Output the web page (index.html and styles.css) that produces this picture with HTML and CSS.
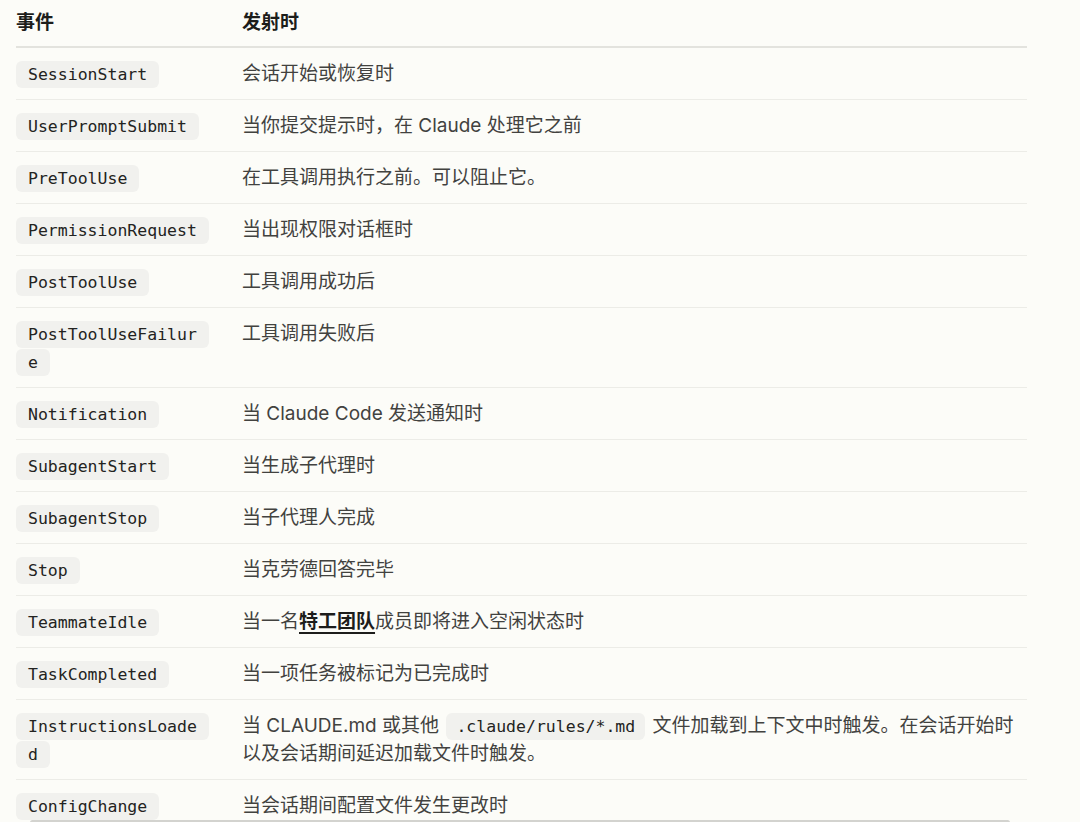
FILE: index.html
```html
<!DOCTYPE html>
<html lang="zh-CN">
<head>
<meta charset="utf-8">
<title>Hooks 事件</title>
<link rel="stylesheet" href="styles.css">
</head>
<body>
<div class="page">
  <table class="events">
    <colgroup>
      <col class="col-event">
      <col class="col-desc">
    </colgroup>
    <thead>
      <tr><th>事件</th><th>发射时</th></tr>
    </thead>
    <tbody>
      <tr><td><code class="tag">SessionStart</code></td><td>会话开始或恢复时</td></tr>
      <tr><td><code class="tag">UserPromptSubmit</code></td><td>当你提交提示时，在 Claude 处理它之前</td></tr>
      <tr><td><code class="tag">PreToolUse</code></td><td>在工具调用执行之前。可以阻止它。</td></tr>
      <tr><td><code class="tag">PermissionRequest</code></td><td>当出现权限对话框时</td></tr>
      <tr><td><code class="tag">PostToolUse</code></td><td>工具调用成功后</td></tr>
      <tr><td><code class="tag">PostToolUseFailure</code></td><td>工具调用失败后</td></tr>
      <tr><td><code class="tag">Notification</code></td><td>当 Claude Code 发送通知时</td></tr>
      <tr><td><code class="tag">SubagentStart</code></td><td>当生成子代理时</td></tr>
      <tr><td><code class="tag">SubagentStop</code></td><td>当子代理人完成</td></tr>
      <tr><td><code class="tag">Stop</code></td><td>当克劳德回答完毕</td></tr>
      <tr><td><code class="tag">TeammateIdle</code></td><td>当一名<a class="link" href="#">特工团队</a>成员即将进入空闲状态时</td></tr>
      <tr><td><code class="tag">TaskCompleted</code></td><td>当一项任务被标记为已完成时</td></tr>
      <tr><td><code class="tag">InstructionsLoaded</code></td><td>当 CLAUDE.md 或其他 <code class="tag inline">.claude/rules/*.md</code> 文件加载到上下文中时触发。在会话开始时以及会话期间延迟加载文件时触发。</td></tr>
      <tr><td><code class="tag">ConfigChange</code></td><td>当会话期间配置文件发生更改时</td></tr>
    </tbody>
  </table>
</div>
<div class="scrollbar"></div>
</body>
</html>
```

FILE: styles.css
```css
html, body {
  margin: 0;
  padding: 0;
  background: #fcfcf8;
}

body {
  height: 822px;
  overflow: hidden;
  font-family: "Inter", "Noto Sans CJK SC", sans-serif;
  color: #42423f;
}

.page {
  padding: 0 53px 0 16px;
}

.events {
  width: 1011px;
  border-collapse: collapse;
  table-layout: fixed;
}

.col-event {
  width: 226px;
}

.events th {
  text-align: left;
  font-size: 19px;
  line-height: 28px;
  font-weight: 700;
  color: #1d1d1b;
  padding: 9px 0 9px 0;
  border-bottom: 2px solid #e3e3de;
}

.events td {
  font-size: 19px;
  line-height: 28px;
  padding: 12px 0 11px 0;
  border-bottom: 1px solid #ececE7;
  vertical-align: top;
}

.events th:first-child,
.events td:first-child {
  padding-right: 28px;
}

.tag {
  font-family: "DejaVu Sans Mono", monospace;
  font-size: 16.5px;
  line-height: 1;
  color: #232321;
  background: #f1f1ee;
  border-radius: 6px;
  padding: 4px 12px;
  -webkit-box-decoration-break: clone;
  box-decoration-break: clone;
}

.tag.inline {
  padding: 4px 10px;
  margin: 0 2px;
}

.events td:first-child .tag {
  word-break: break-all;
}

.link {
  color: #1d1d1b;
  font-weight: 700;
  text-decoration: underline;
  text-decoration-thickness: 1.5px;
  text-underline-offset: 4px;
}

.scrollbar {
  position: fixed;
  left: 30px;
  width: 980px;
  bottom: -3px;
  height: 5px;
  border-radius: 3px;
  background: #d3d3cf;
}
```
